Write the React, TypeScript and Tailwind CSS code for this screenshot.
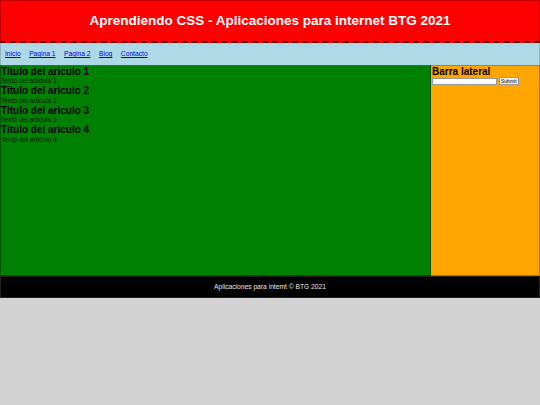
import React from 'react';

const articles = [1, 2, 3, 4];
const links = ['Inicio', 'Pagina 1', 'Pagina 2', 'Blog', 'Contacto'];

export default function App() {
  return (
    <div className="min-h-[405px] bg-[#d3d3d3] font-['Liberation_Sans',Arial,sans-serif] text-[6.7px] leading-[8px]">
      {/* cabecera */}
      <header className="h-[43px] bg-[#ff0000] border border-[#c00000] border-b-[#500000] border-b-2 border-dashed [border-top-style:solid] [border-left-style:solid] [border-right-style:solid] flex items-center justify-center">
        <h1 className="text-[13.5px] leading-[16px] font-bold text-white">
          Aprendiendo CSS - Aplicaciones para internet BTG 2021
        </h1>
      </header>

      {/* menu */}
      <nav className="h-[22px] bg-[#add8e6] border-x border-[#8fb3bf] flex items-center gap-[8.5px] px-[4px]">
        {links.map(l => (
          <a key={l} href="#" className="text-[#0000ee] underline">
            {l}
          </a>
        ))}
      </nav>

      <div className="flex h-[211px]">
        {/* articulos */}
        <main className="w-[431px] bg-[#008000] border border-[#005500] border-t-[#3a6a3a]">
          {articles.map(n => (
            <article key={n}>
              <h2 className="text-[10px] leading-[11.4px] font-bold text-black">Titulo del ariculo {n}</h2>
              <p className="text-[#0a1a0a]">Texto del articulo {n}</p>
            </article>
          ))}
        </main>

        {/* lateral */}
        <aside className="flex-1 bg-[#ffa500] border border-[#b07400] border-l-0 border-t-[#8a8a5a]">
          <h3 className="text-[10px] leading-[11px] font-bold text-black pl-[1px]">Barra lateral</h3>
          <form className="flex items-center gap-[2px] pl-[1px]" onSubmit={e => e.preventDefault()}>
            <input type="text" className="w-[65px] h-[7px] bg-white border border-[#999] outline-none" />
            <button type="submit" className="h-[8px] px-[1px] text-[5px] leading-[6px] bg-[#efefef] border border-[#999] text-black">
              Submit
            </button>
          </form>
        </aside>
      </div>

      {/* pie */}
      <footer className="h-[22px] bg-black flex items-center justify-center border border-[#222]">
        <p className="text-[#e8e8e8] text-[6.7px]">Aplicaciones para intemt © BTG 2021</p>
      </footer>
    </div>
  );
}
